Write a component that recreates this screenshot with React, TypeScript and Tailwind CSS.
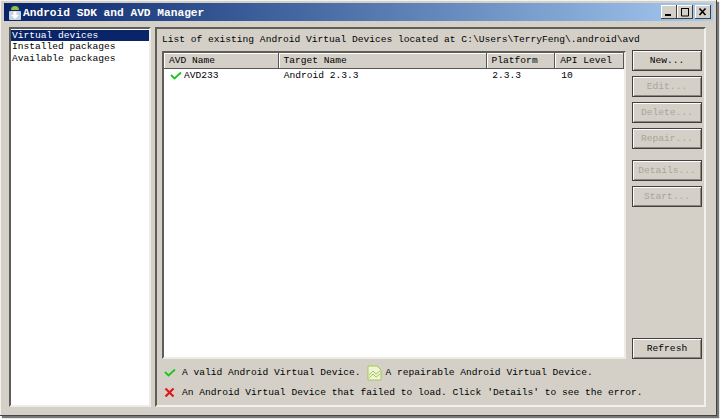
const font = { fontFamily: '"Liberation Mono", monospace' };

function Check({ className = "" }: { className?: string }) {
  return (
    <svg width="12" height="9" viewBox="0 0 12 9" className={className}>
      <path d="M1 4 L4.5 7.5 L11 1.5" fill="none" stroke="#18c818" strokeWidth="1.8" />
    </svg>
  );
}

function Btn({ label, off, mt = "" }: { label: string; off?: boolean; mt?: string }) {
  return (
    <div
      className={`w-[70px] h-[21px] flex items-center justify-center border border-[#404040] shadow-[inset_1px_1px_0_#ffffff,inset_-1px_-1px_0_#8a8780] ${mt} ${
        off ? "text-[#a8a59e]" : "text-black"
      }`}
    >
      {label}
    </div>
  );
}

function Th({ label, w }: { label: string; w: string }) {
  return (
    <div
      className={`${w} h-[16px] pl-[5px] flex items-center border-r border-b border-r-[#555] border-b-[#555] shadow-[inset_1px_1px_0_#ffffff]`}
    >
      {label}
    </div>
  );
}

export default function App() {
  return (
    <div className="w-[721px] h-[419px] bg-white overflow-hidden text-[9.6px] leading-none text-black" style={font}>
      <div className="w-[717px] h-[416px] bg-[#d4d0c8] pt-[3px] px-[3px] flex flex-col border-r border-b border-r-[#444] border-b-[#444] shadow-[inset_1px_1px_0_#f4f2ee,2px_2px_1px_#777]">
        <div className="h-[18px] w-[709px] ml-[1px] shrink-0 flex items-center bg-gradient-to-r from-[#0a246a] to-[#a6caf0] pl-[4px] pr-[2px]">
          <svg width="14" height="15" viewBox="0 0 14 15" className="shrink-0">
            <path d="M3 5 A4 4 0 0 1 11 5 Z" fill="#8fbf3f" />
            <rect x="1" y="6" width="12" height="9" rx="1" fill="#c9d3dc" />
            <path d="M5.5 6.5 H8.5 V10 H11 L7 14 L3 10 H5.5 Z" fill="#fff" />
          </svg>
          <span className="ml-[1px] pt-[3px] text-white font-bold text-[11.2px] whitespace-nowrap">Android SDK and AVD Manager</span>
          <div className="ml-auto flex items-center">
            {[
              <path key="a" d="M2 9 H8" stroke="#000" strokeWidth="2" />,
              <path key="b" d="M2 2.5 H10 M2.5 2 V10 H9.5 V2" stroke="#000" fill="none" strokeWidth="1" />,
              <path key="c" d="M2.5 2.5 L8.5 9 M8.5 2.5 L2.5 9" stroke="#000" strokeWidth="1.6" />,
            ].map((p, i) => (
              <div
                key={i}
                className={`w-[16px] h-[14px] bg-[#d4d0c8] flex items-center justify-center border-r border-b border-r-[#404040] border-b-[#404040] shadow-[inset_1px_1px_0_#fff] ${
                  i === 2 ? "ml-[2px]" : ""
                }`}
              >
                <svg width="12" height="12" viewBox="0 0 12 12">{p}</svg>
              </div>
            ))}
          </div>
        </div>
        <div className="flex flex-1 pt-[6px] pl-[6px] pr-[7px] pb-[8px] gap-[4px] min-h-0">
          <div className="w-[142px] shrink-0 bg-white border-l-2 border-t-2 border-l-[#5f5d58] border-t-[#5f5d58] border-r-2 border-b-2 border-r-[#eeece7] border-b-[#eeece7] pt-[1px]">
            <div className="h-[11px] bg-[#0a246a] text-white pl-[1px] flex items-center">Virtual devices</div>
            <div className="h-[12px] pl-[1px] flex items-center">Installed packages</div>
            <div className="h-[11px] pl-[1px] flex items-center">Available packages</div>
          </div>
          <div className="flex-1 min-w-0 border-l-2 border-t-2 border-l-[#5f5d58] border-t-[#5f5d58] border-r-2 border-b-2 border-r-[#f2f0eb] border-b-[#f2f0eb] flex flex-col pl-[5px] pr-[3px] pt-[5px]">
            <div className="h-[11px] flex items-center whitespace-nowrap shrink-0">
              List of existing Android Virtual Devices located at C:\Users\TerryFeng\.android\avd
            </div>
            <div className="flex flex-1 min-h-0 mt-[6px] gap-[6px]">
              <div className="w-[464px] h-[308px] bg-white border-l-2 border-t-2 border-l-[#5f5d58] border-t-[#5f5d58] border-r-2 border-b-2 border-r-[#eeece7] border-b-[#eeece7]">
                <div className="flex bg-[#d4d0c8]">
                  <Th label="AVD Name" w="w-[115px]" />
                  <Th label="Target Name" w="w-[209px]" />
                  <Th label="Platform" w="w-[69px]" />
                  <Th label="API Level" w="w-[69px]" />
                </div>
                <div className="flex h-[14px] items-center">
                  <div className="w-[115px] pl-[6px] flex items-center gap-[2px]">
                    <Check className="mb-[2px]" />
                    <span>AVD233</span>
                  </div>
                  <div className="w-[209px] pl-[5px]">Android 2.3.3</div>
                  <div className="w-[69px] pl-[5px]">2.3.3</div>
                  <div className="w-[68px] pl-[5px]">10</div>
                </div>
              </div>
              <div className="flex flex-col -mt-[1px]">
                <Btn label="New..." />
                <Btn label="Edit..." off mt="mt-[5px]" />
                <Btn label="Delete..." off mt="mt-[5px]" />
                <Btn label="Repair..." off mt="mt-[5px]" />
                <Btn label="Details..." off mt="mt-[11px]" />
                <Btn label="Start..." off mt="mt-[5px]" />
                <Btn label="Refresh" mt="mt-[131px]" />
              </div>
            </div>
            <div className="shrink-0 h-[40px] mb-[2px] flex flex-col whitespace-nowrap">
              <div className="h-[20px] flex items-center">
                <Check className="ml-[2px] mb-[1px]" />
                <span className="ml-[6px]">A valid Android Virtual Device.</span>
                <svg width="15" height="16" viewBox="0 0 15 16" className="ml-[7px]">
                  <path d="M1 1 H10 L14 5 V15 H1 Z" fill="#eef4d8" stroke="#a5c850" />
                  <path d="M2 10 L6 6 L9 9 L13 6 M2 13 L6 9 L9 12 L13 9" fill="none" stroke="#a5c850" />
                </svg>
                <span className="ml-[3px]">A repairable Android Virtual Device.</span>
              </div>
              <div className="h-[20px] flex items-center">
                <svg width="11" height="11" viewBox="0 0 11 11" className="ml-[2px] mb-[1px]">
                  <path d="M1.5 1.5 L9.5 9.5 M9.5 1.5 L1.5 9.5" stroke="#e01818" strokeWidth="2.2" />
                </svg>
                <span className="ml-[7px]">An Android Virtual Device that failed to load. Click 'Details' to see the error.</span>
              </div>
            </div>
          </div>
        </div>
      </div>
    </div>
  );
}
